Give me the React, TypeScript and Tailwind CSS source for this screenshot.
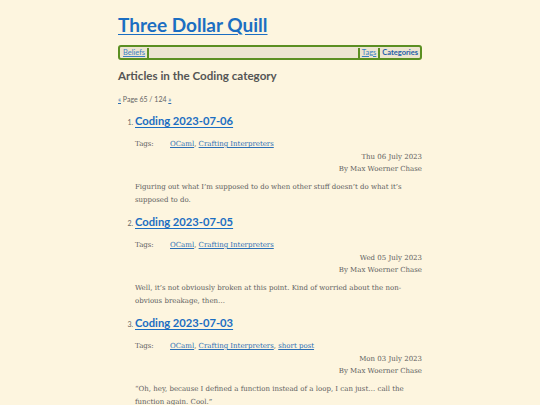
const sans = "font-['Lato','Roboto',sans-serif]";
const serif = "font-['DejaVu_Serif','Liberation_Serif',serif]";

type Post = {
  title: string;
  tags: string[];
  date: string;
  summary: string;
};

const posts: Post[] = [
  {
    title: "Coding 2023-07-06",
    tags: ["OCaml", "Crafting Interpreters"],
    date: "Thu 06 July 2023",
    summary:
      "Figuring out what I\u2019m supposed to do when other stuff doesn\u2019t do what it\u2019s supposed to do.",
  },
  {
    title: "Coding 2023-07-05",
    tags: ["OCaml", "Crafting Interpreters"],
    date: "Wed 05 July 2023",
    summary:
      "Well, it\u2019s not obviously broken at this point. Kind of worried about the non-obvious breakage, then\u2026",
  },
  {
    title: "Coding 2023-07-03",
    tags: ["OCaml", "Crafting Interpreters", "short post"],
    date: "Mon 03 July 2023",
    summary:
      "\u201cOh, hey, because I defined a function instead of a loop, I can just\u2026 call the function again. Cool.\u201d",
  },
];

const Article = ({ post }: { post: Post }) => (
  <li className="pb-[7px] marker:text-[7px] marker:text-[#666]">
    <h2 className={`${sans} text-[11.2px] font-bold leading-[16px]`}>
      <a href="#" className="text-[#1b6ec2] underline underline-offset-2">
        {post.title}
      </a>
    </h2>
    <div className={`${serif} mt-[9px] flex text-[7px] leading-[12px] text-[#606060]`}>
      <span className="w-[35px] shrink-0">Tags:</span>
      <span>
        {post.tags.map((t, i) => (
          <span key={t}>
            <a href="#" className="text-[#2c6fb5] underline">
              {t}
            </a>
            {i < post.tags.length - 1 ? ", " : ""}
          </span>
        ))}
      </span>
    </div>
    <div className={`${serif} mt-[1px] text-right text-[7px] leading-[12px] text-[#606060]`}>
      <div>{post.date}</div>
      <div>By Max Woerner Chase</div>
    </div>
    <p className={`${serif} mt-[6px] text-[7px] leading-[13px] text-[#606060]`}>
      {post.summary}
    </p>
  </li>
);

export default function App() {
  return (
    <div className="min-h-[405px] w-full bg-[#fdf5df]">
      <div className="mx-auto w-[304px] pt-[14px]">
        <h1 className={`${sans} text-[19px] font-bold leading-[22px]`}>
          <a href="#" className="text-[#1b6ec2] underline underline-offset-2">
            Three Dollar Quill
          </a>
        </h1>
        <nav
          className={`${sans} mt-[9px] flex h-[15px] items-center rounded-[3px] border-2 border-[#5b8f22] bg-[#ede5d1] px-[2px] text-[7.5px]`}
        >
          <a href="#" className="border-r-2 border-[#5b8f22] pr-[2px] pl-[1px] leading-[10px] text-[#3b7fc4] underline">
            Beliefs
          </a>
          <div className="flex-1" />
          <a href="#" className="border-l-2 border-[#5b8f22] px-[2px] leading-[10px] text-[#3b7fc4] underline">
            Tags
          </a>
          <a href="#" className="border-l-2 border-[#5b8f22] pl-[2px] leading-[10px] font-bold text-[#1f5ea8]">
            Categories
          </a>
        </nav>
        <h2 className={`${sans} mt-2 text-[11.6px] font-bold leading-[16px] text-[#555]`}>
          Articles in the Coding category
        </h2>
        <p className={`${sans} mt-[10px] text-[7px] leading-[10px] text-[#666]`}>
          <a href="#" className="text-[#2c6fb5] underline">«</a> Page 65 / 124{" "}
          <a href="#" className="text-[#2c6fb5] underline">»</a>
        </p>
        <ol className={`${sans} mt-[9px] list-decimal pl-[17px]`}>
          {posts.map((p) => (
            <Article key={p.title} post={p} />
          ))}
        </ol>
      </div>
    </div>
  );
}
